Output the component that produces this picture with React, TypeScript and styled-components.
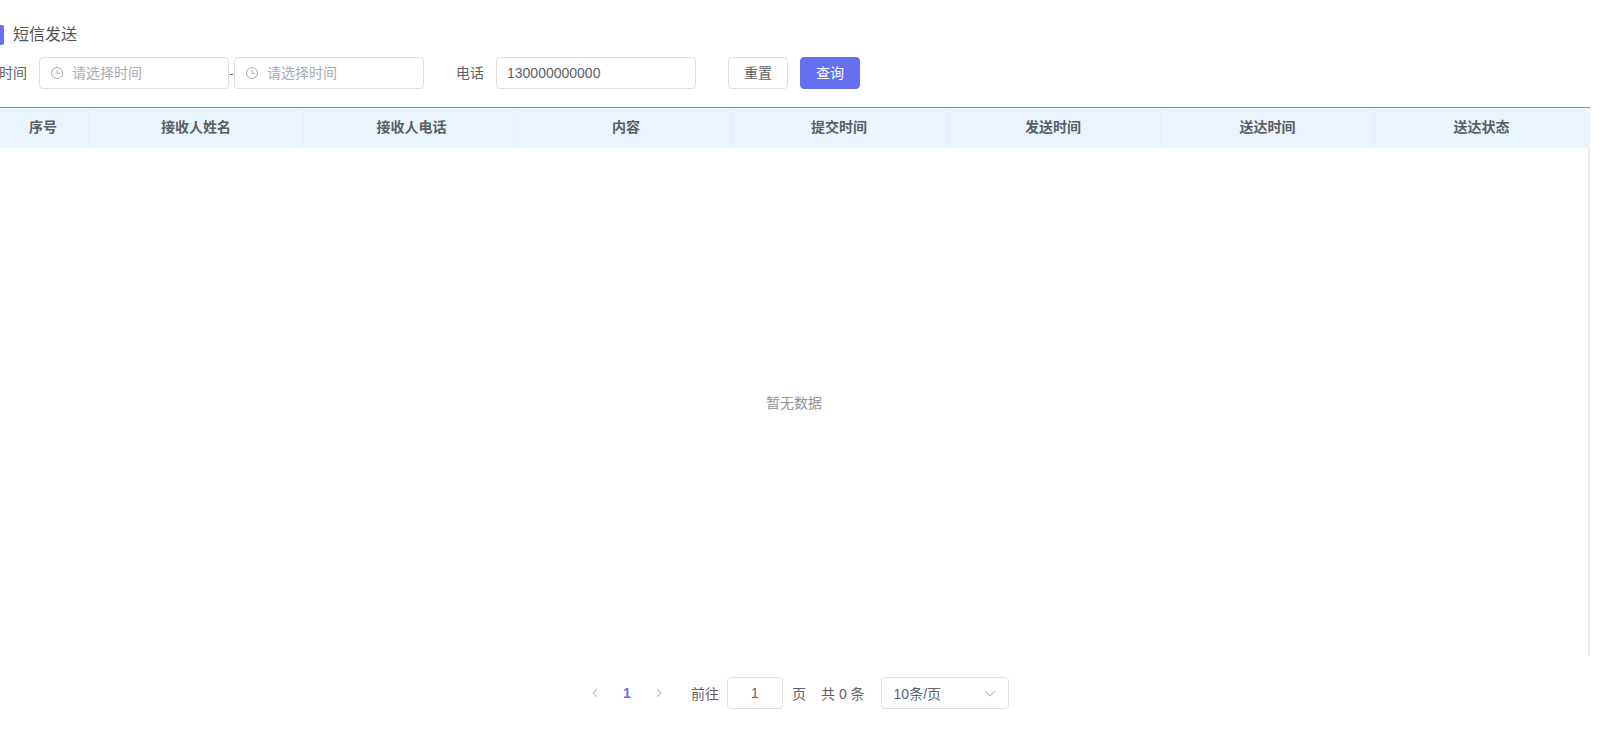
import React from "react";
import styled, { createGlobalStyle } from "styled-components";

const Global = createGlobalStyle`
  html, body { margin: 0; padding: 0; background: #fff; overflow: hidden; }
  body { font-family: "Liberation Sans", "Noto Sans CJK SC", sans-serif; font-size: 14px; color: #606266; }
  * { box-sizing: border-box; }
`;

const Page = styled.div`
  width: 1608px;
  height: 747px;
  overflow: hidden;
  display: flex;
  flex-direction: column;
  padding-top: 25px;
`;

const TitleRow = styled.div`
  display: flex;
  align-items: center;
  gap: 9px;
  height: 20px;
`;

const TitleMark = styled.span`
  width: 4px;
  height: 20px;
  background: #6470ef;
  border-radius: 0 2px 2px 0;
`;

const TitleText = styled.h1`
  margin: 0;
  font-size: 16px;
  font-weight: 400;
  color: #555;
  line-height: 20px;
`;

const FilterRow = styled.div`
  display: flex;
  align-items: center;
  height: 32px;
  margin-top: 12px;
  margin-left: -1px;
`;

const Label = styled.span<{ $gap: number; $left?: number }>`
  font-size: 14px;
  line-height: 32px;
  color: #606266;
  margin-left: ${p => p.$left ?? 0}px;
  margin-right: ${p => p.$gap}px;
  white-space: nowrap;
`;

const ClippedLabel = styled(Label)`
  width: 28px;
`;

const Field = styled.div<{ $w: number; $pad: number }>`
  width: ${p => p.$w}px;
  height: 32px;
  display: flex;
  align-items: center;
  gap: 8px;
  padding-left: ${p => p.$pad}px;
  border: 1px solid #dcdfe6;
  border-radius: 4px;
  background: #fff;
  font-size: 14px;
  flex-shrink: 0;
`;

const Placeholder = styled.span`
  color: #a9acb3;
  padding-bottom: 2px;
`;

const Value = styled.span`
  color: #606266;
`;

const Dash = styled.span`
  width: 5px;
  text-align: center;
  font-size: 13px;
  color: #606266;
`;

const Button = styled.button<{ $primary?: boolean; $left: number }>`
  width: 60px;
  height: 32px;
  margin-left: ${p => p.$left}px;
  padding: 0 0 2px;
  border-radius: 4px;
  font-family: inherit;
  font-size: 14px;
  border: 1px solid ${p => (p.$primary ? "#6470ef" : "#dcdfe6")};
  background: ${p => (p.$primary ? "#6470ef" : "#fff")};
  color: ${p => (p.$primary ? "#fff" : "#606266")};
`;

const Table = styled.div`
  margin-top: 18px;
  width: 1590px;
  height: 549px;
  display: flex;
  flex-direction: column;
  border-right: 2px solid #ebeef5;
`;

const HeadRow = styled.div`
  display: grid;
  grid-template-columns: 89px 215px 214px 215px 215px 213px 214px 213px;
  height: 41px;
  background: #ebf4fd;
  border-top: 1px solid #4a9cf5;
  flex-shrink: 0;
  margin-right: -2px;
`;

const HeadCell = styled.div<{ $shift: number }>`
  display: flex;
  align-items: center;
  justify-content: center;
  padding: 0 2px 5px ${p => p.$shift * 2}px;
  font-size: 14px;
  font-weight: 700;
  color: #5a5d63;
  border-right: 1px solid #e6eff9;
  &:last-child { border-right: 0; }
`;

const Empty = styled.div`
  flex: 1;
  display: flex;
  align-items: center;
  justify-content: center;
  font-size: 14px;
  color: #909399;
`;

const Pager = styled.div`
  display: flex;
  align-items: center;
  height: 32px;
  margin-top: 21px;
  padding-left: 589px;
  font-size: 14px;
  color: #606266;
`;

const Arrow = styled.span<{ $left?: number }>`
  width: 12px;
  margin-left: ${p => p.$left ?? 0}px;
  display: flex;
  justify-content: center;
  color: #c0c4cc;
`;

const Current = styled.span`
  width: 22px;
  margin-left: 15px;
  text-align: center;
  color: #6470ef;
  font-weight: 700;
  font-size: 14px;
`;

const PagerText = styled.span<{ $left: number }>`
  margin-left: ${p => p.$left}px;
  white-space: nowrap;
`;

const JumpInput = styled.div`
  width: 56px;
  height: 32px;
  margin-left: 8px;
  display: flex;
  align-items: center;
  justify-content: center;
  border: 1px solid #dcdfe6;
  border-radius: 4px;
`;

const Select = styled.div`
  width: 128px;
  height: 32px;
  margin-left: 16px;
  display: flex;
  align-items: center;
  justify-content: space-between;
  padding: 0 12px 0 12px;
  border: 1px solid #dcdfe6;
  border-radius: 4px;
`;

const Clock = () => (
  <svg width="14" height="14" viewBox="0 0 14 14" fill="none" stroke="#a9acb3" strokeWidth="1">
    <circle cx="7" cy="7" r="5.5" />
    <path d="M7 3.8V7.3H10" />
  </svg>
);

const Chevron = ({ d }: { d: string }) => (
  <svg width="12" height="12" viewBox="0 0 12 12" fill="none" stroke="#c0c4cc" strokeWidth="1.1">
    <path d={d} />
  </svg>
);

const columns = [
  { title: "序号", shift: 0 },
  { title: "接收人姓名", shift: 1 },
  { title: "接收人电话", shift: 2 },
  { title: "内容", shift: 2 },
  { title: "提交时间", shift: 0 },
  { title: "发送时间", shift: 0 },
  { title: "送达时间", shift: 1 },
  { title: "送达状态", shift: 1 },
];

export default function App() {
  return (
    <Page>
      <Global />
      <TitleRow>
        <TitleMark />
        <TitleText>短信发送</TitleText>
      </TitleRow>
      <FilterRow>
        <ClippedLabel $gap={12}>时间</ClippedLabel>
        <Field $w={190} $pad={10}>
          <Clock />
          <Placeholder>请选择时间</Placeholder>
        </Field>
        <Dash>-</Dash>
        <Field $w={190} $pad={10}>
          <Clock />
          <Placeholder>请选择时间</Placeholder>
        </Field>
        <Label $left={32} $gap={12}>电话</Label>
        <Field $w={200} $pad={10}>
          <Value>130000000000</Value>
        </Field>
        <Button $left={32}>重置</Button>
        <Button $left={12} $primary>查询</Button>
      </FilterRow>
      <Table>
        <HeadRow>
          {columns.map(c => (
            <HeadCell key={c.title} $shift={c.shift}>{c.title}</HeadCell>
          ))}
        </HeadRow>
        <Empty>暂无数据</Empty>
      </Table>
      <Pager>
        <Arrow>
          <Chevron d="M8 2L4 6L8 10" />
        </Arrow>
        <Current>1</Current>
        <Arrow $left={15}>
          <Chevron d="M4 2L8 6L4 10" />
        </Arrow>
        <PagerText $left={26}>前往</PagerText>
        <JumpInput>1</JumpInput>
        <PagerText $left={9}>页</PagerText>
        <PagerText $left={15}>共 0 条</PagerText>
        <Select>
          <span>10条/页</span>
          <Chevron d="M1 4L6 9L11 4" />
        </Select>
      </Pager>
    </Page>
  );
}
